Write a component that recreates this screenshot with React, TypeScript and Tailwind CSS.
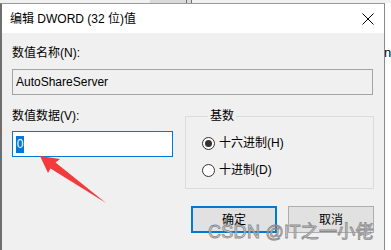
const font = { fontFamily: '"Liberation Sans", "Noto Sans CJK SC", sans-serif' };

function Radio({ checked, label }: { checked?: boolean; label: string }) {
  return (
    <div className="flex items-center h-[16px]">
      <span className="w-[13px] h-[13px] rounded-full border border-[#333333] bg-white flex items-center justify-center">
        {checked && <span className="w-[7px] h-[7px] rounded-full bg-[#333333]" />}
      </span>
      <span className="ml-[4px] text-[12px] leading-[16px] text-black">{label}</span>
    </div>
  );
}

export default function App() {
  return (
    <div className="relative w-[391px] h-[250px] overflow-hidden bg-white" style={font}>
      {/* strip of the window behind */}
      <div className="flex h-[3px] bg-[#f0f0f0]">
        <div className="w-[150px]" />
        <div className="w-[36px] bg-[#d9d9d9]" />
        <div className="w-[1px] bg-[#707070]" />
        <div className="w-[4px] bg-[#d9d9d9]" />
        <div className="w-[1px] bg-[#707070]" />
      </div>

      <div className="flex">
        {/* dialog */}
        <div className="w-[385px] h-[247px] border-l-2 border-l-[#6f6f6f] border-r border-r-[#8a8a8a] border-t border-t-[#9a9a9a] flex flex-col">
          <div className="h-[29px] bg-white flex items-center justify-between pl-[8px] pr-[8px]">
            <span className="text-[12px] leading-[16px] text-black">编辑 DWORD (32 位)值</span>
            <svg width="12" height="12" viewBox="0 0 12 12" className="mr-[2px]">
              <path d="M0.5 0.5 L11.5 11.5 M11.5 0.5 L0.5 11.5" stroke="#000" strokeWidth="1" fill="none" />
            </svg>
          </div>

          <div className="flex-1 bg-[#f0f0f0] pl-[10px] pr-[10px] pt-[12px]">
            <div className="text-[12px] leading-[16px] text-black">数值名称(N):</div>
            <div className="mt-[8px] h-[26px] w-[361px] border border-[#a3a3a3] flex items-center pl-[3px] text-[12px] text-black">
              AutoShareServer
            </div>

            <div className="mt-[13px] flex">
              <div className="w-[173px]">
                <div className="text-[12px] leading-[16px] text-black">数值数据(V):</div>
                <div className="mt-[7px] h-[26px] w-[161px] border border-[#0078d7] bg-white flex items-center pl-[3px]">
                  <span className="h-[17px] w-[8px] bg-[#0078d7] text-white text-[12px] leading-[17px] flex justify-center">0</span>
                </div>
              </div>

              <fieldset className="w-[189px] h-[81px] border border-[#dcdcdc] pl-[16px]">
                <legend className="ml-[6px] px-[2px] text-[12px] leading-[16px] text-black">基数</legend>
                <div className="mt-[11px] flex flex-col gap-[11px]">
                  <Radio checked label="十六进制(H)" />
                  <Radio label="十进制(D)" />
                </div>
              </fieldset>
            </div>

            <div className="mt-[17px] flex justify-end gap-[11px]">
              <button className="w-[86px] h-[27px] border-2 border-[#0078d7] bg-[#e1e1e1] text-[12px] text-black">确定</button>
              <button className="w-[86px] h-[27px] border border-[#adadad] bg-[#e1e1e1] text-[12px] text-black">取消</button>
            </div>
          </div>
        </div>

        {/* page behind, right edge */}
        <div className="w-[6px] overflow-hidden">
          <div className="mt-[42px] -ml-[1px] text-[13px] leading-[16px] text-black whitespace-nowrap">ng</div>
        </div>
      </div>

      {/* annotation arrow */}
      <svg className="absolute left-0 top-0" width="391" height="250" viewBox="0 0 391 250">
        <polygon points="40,156 60,159 55.5,162.5 106,203 50.5,168.5 48,173" fill="#f23b3b" />
      </svg>

      {/* watermark */}
      <div className="absolute left-[208px] top-[220px] text-[18px] leading-[24px] tracking-[0.3px] whitespace-nowrap text-[#d8d8d8] [-webkit-text-stroke:0.8px_#808080] opacity-90">
        CSDN @IT之一小佬
      </div>
    </div>
  );
}
